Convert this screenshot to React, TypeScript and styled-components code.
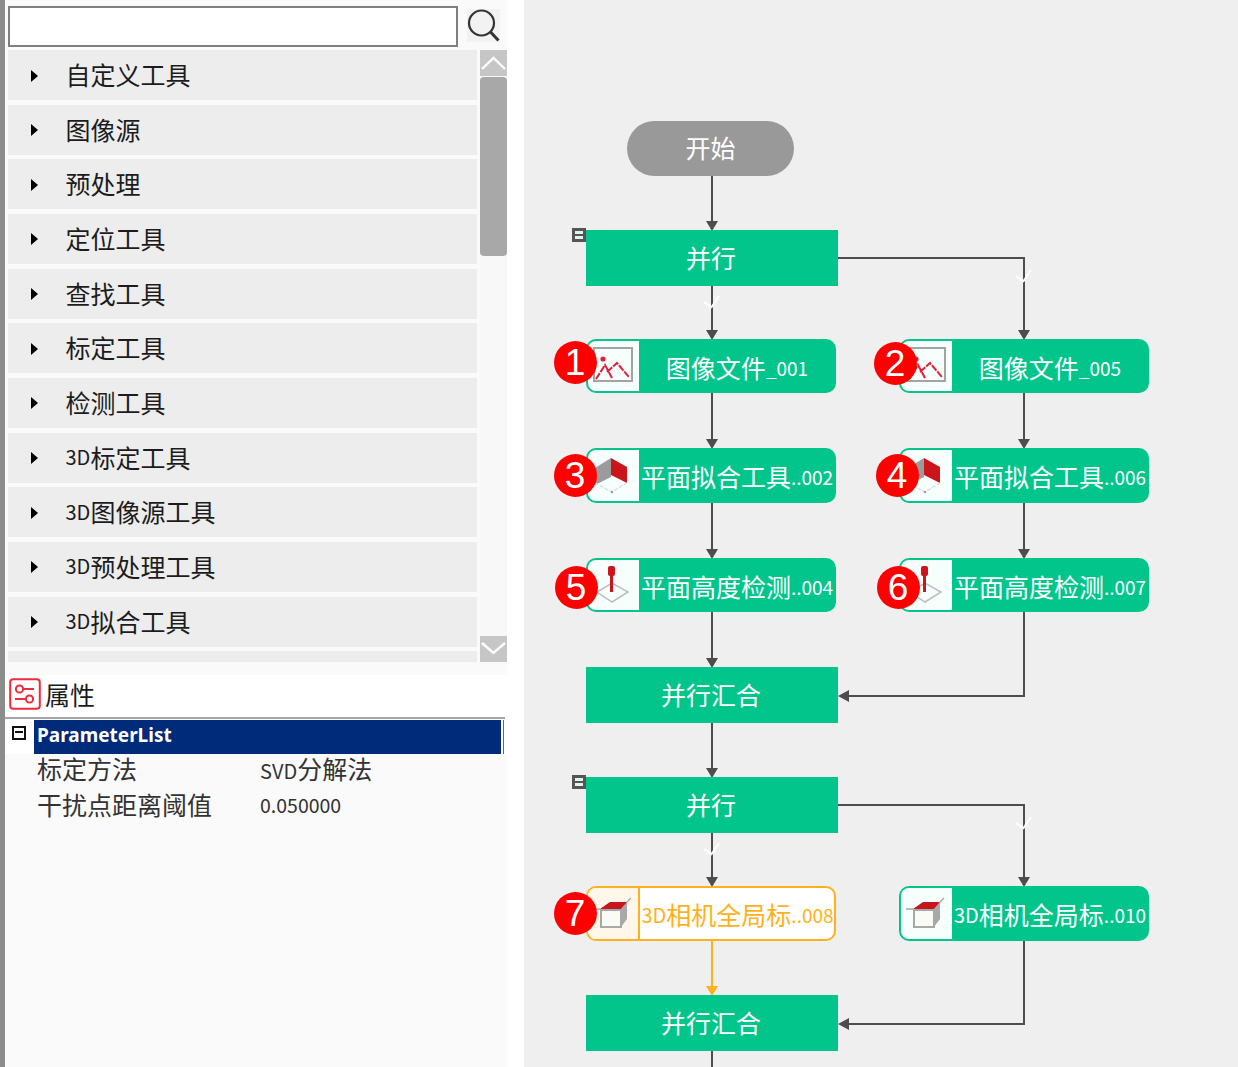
import React from "react"
import styled, { createGlobalStyle } from "styled-components"

const CJK = `"Noto Sans CJK SC", "Noto Sans", sans-serif`

const GlobalStyle = createGlobalStyle`
  html, body {
    margin: 0;
    padding: 0;
    background: #fff;
    font-family: ${CJK};
  }
`

const Page = styled.div`
  display: flex;
  width: 1238px;
  height: 1067px;
  overflow: hidden;
`

const Sidebar = styled.aside`
  box-sizing: border-box;
  width: 524px;
  flex: none;
  display: flex;
  padding-right: 17px;
  background: #fff;
`

const SideEdge = styled.div`
  width: 5px;
  flex: none;
  background: #8c8c8c;
`

const SideBody = styled.div`
  flex: 1;
  min-width: 0;
  display: flex;
  flex-direction: column;
  background: #fafafa;
`

const SearchRow = styled.div`
  display: flex;
  align-items: center;
  height: 50px;
  padding: 3px 0 0 3px;
  box-sizing: border-box;
  gap: 9px;
`

const SearchInput = styled.div`
  box-sizing: border-box;
  width: 450px;
  height: 41px;
  background: #fff;
  border: 2px solid #7f7f7f;
`

const SearchButton = styled.div`
  width: 33px;
  height: 33px;
  margin-bottom: 2px;
  background: #f2f2f2;
  display: flex;
`

const ToolBox = styled.div`
  display: flex;
  height: 612px;
  flex: none;
`

const ToolList = styled.ul`
  list-style: none;
  margin: 0 0 0 3px;
  padding: 0;
  width: 469px;
  height: 612px;
  overflow: hidden;
  display: flex;
  flex-direction: column;
  gap: 4.67px;
`

const ToolItem = styled.li`
  flex: none;
  box-sizing: border-box;
  height: 50px;
  display: flex;
  align-items: center;
  padding: 0 0 1px 23px;
  background: #ededed;
  color: #1c1c1c;
  font-size: 25px;
  line-height: 1;
`

const Caret = styled.span`
  width: 0;
  height: 0;
  margin: 2px 27.5px 0 0;
  border-left: 7px solid #000;
  border-top: 6px solid transparent;
  border-bottom: 6px solid transparent;
`

const Latin = styled.span<{ $size?: number }>`
  font-size: ${(p) => p.$size ?? 20}px;
`

const ScrollTrack = styled.div`
  margin-left: 3px;
  width: 27px;
  height: 612px;
  display: flex;
  flex-direction: column;
  background: #f8f8f8;
`

const ScrollStep = styled.div`
  height: 26px;
  flex: none;
  background: #c6c6c6;
  display: flex;
`

const ScrollThumb = styled.div`
  height: 179px;
  margin-top: 1px;
  flex: none;
  border-radius: 4px;
  background: #a8a8a8;
`

const ScrollSpace = styled.div`
  flex: 1;
`

const PropsHeader = styled.div`
  margin-top: 13px;
  height: 42px;
  display: flex;
  align-items: center;
  gap: 4px;
  padding: 0 0 4px 4px;
  background: #fff;
  color: #1c1c1c;
  font-size: 25px;
  box-sizing: border-box;
  line-height: 1;
`

const PropsRule = styled.div`
  height: 2px;
  width: 500px;
  background: #a6a6a6;
`

const GroupRow = styled.div`
  display: flex;
  height: 34px;
  margin-top: 1px;
  background: #fff;
`

const GroupToggle = styled.div`
  width: 29px;
  flex: none;
  position: relative;
`

const MinusBox = styled.span`
  position: absolute;
  left: 7px;
  top: 6px;
  box-sizing: border-box;
  width: 14px;
  height: 14px;
  border: 2px solid #111;
  background: #fff;
  &::after {
    content: "";
    position: absolute;
    left: 1px;
    right: 1px;
    top: 3px;
    height: 2px;
    background: #111;
  }
`

const GroupTitle = styled.div`
  width: 467px;
  flex: none;
  background: #002a7a;
  color: #fff;
  font-family: "Noto Sans", sans-serif;
  font-weight: 700;
  font-size: 19px;
  line-height: 31px;
  padding-left: 3px;
  box-sizing: border-box;
`

const RedEdge = styled.div`
  width: 1px;
  margin-left: 2px;
  background: #ee2a3c;
`

const PropRows = styled.div`
  display: flex;
  flex-direction: column;
`

const PropRow = styled.div`
  display: grid;
  grid-template-columns: 223px 1fr;
  height: 36px;
  align-items: start;
  padding-left: 32px;
  color: #333;
  font-size: 25px;
  line-height: 29px;
`

const Canvas = styled.main`
  position: relative;
  flex: 1;
  background: #efefef;
  overflow: hidden;
`

const Wires = styled.svg`
  position: absolute;
  left: 0;
  top: 0;
  width: 714px;
  height: 1067px;
`

const Node = styled.div<{ $x: number; $y: number; $w: number; $h: number }>`
  position: absolute;
  left: ${(p) => p.$x}px;
  top: ${(p) => p.$y}px;
  width: ${(p) => p.$w}px;
  height: ${(p) => p.$h}px;
  box-sizing: border-box;
`

const StartNode = styled(Node)`
  display: flex;
  align-items: center;
  justify-content: center;
  padding: 0 0 3px 0;
  border-radius: 28px;
  background: #999;
  color: #fff;
  font-size: 25px;
`

const FlowNode = styled(Node)`
  display: flex;
  align-items: center;
  justify-content: center;
  padding: 0 2px 3px 0;
  background: #02c58c;
  color: #fff;
  font-size: 25px;
`

const Collapse = styled.span<{ $x: number; $y: number }>`
  position: absolute;
  left: ${(p) => p.$x}px;
  top: ${(p) => p.$y}px;
  box-sizing: border-box;
  width: 14px;
  height: 14px;
  border: 3px solid #555;
  background: #dff5ee;
  &::after {
    content: "";
    position: absolute;
    left: 0;
    right: 0;
    top: 3px;
    height: 2px;
    background: #555;
  }
`

const ToolNode = styled(Node)<{ $active?: boolean }>`
  display: flex;
  overflow: hidden;
  border: 2px solid ${(p) => (p.$active ? "#ffb11b" : "#02c58c")};
  border-radius: 10px;
  background: ${(p) => (p.$active ? "#fff" : "#02c58c")};
  color: ${(p) => (p.$active ? "#ffb11b" : "#fff")};
`

const ToolIcon = styled.div<{ $active?: boolean }>`
  width: ${(p) => (p.$active ? 52 : 51)}px;
  flex: none;
  background: ${(p) => (p.$active ? "#fff7e9" : "#f6fffc")};
  border-right: ${(p) => (p.$active ? "2px solid #ffb11b" : "0")};
  box-sizing: border-box;
`

const ToolLabel = styled.div`
  flex: 1;
  min-width: 0;
  display: flex;
  align-items: center;
  justify-content: center;
  font-size: 25px;
  white-space: nowrap;
  padding: 2px 0 0 1px;
  line-height: 1;
`

const Badge = styled.span<{ $x: number; $y: number }>`
  position: absolute;
  left: ${(p) => p.$x - 21.5}px;
  top: ${(p) => p.$y - 21.5}px;
  width: 43px;
  height: 43px;
  border-radius: 50%;
  background: #ff0000;
  color: #fff;
  display: flex;
  align-items: center;
  justify-content: center;
  font-family: "Liberation Sans", Arial, sans-serif;
  font-size: 37px;
  line-height: 1;
`

const SearchIcon = () => (
  <svg width="33" height="33" viewBox="0 0 33 33" fill="none" stroke="#333" strokeWidth="2.2">
    <circle cx="14.5" cy="14" r="12.5" />
    <path d="M23.5 23l8 8.5" strokeWidth="3" />
  </svg>
)

const ChevronIcon = ({ down }: { down?: boolean }) => (
  <svg width="27" height="26" viewBox="0 0 27 26" fill="none" stroke="#fff" strokeWidth="2.4">
    <path d={down ? "M2 7l11.5 10L25 7" : "M2 19L13.5 8 25 19"} />
  </svg>
)

const PropsIcon = () => (
  <svg width="32" height="32" viewBox="0 0 32 32" fill="none" stroke="#ee2a3c" strokeWidth="2">
    <rect x="1.2" y="1.2" width="29.6" height="29.6" rx="3" />
    <circle cx="10.5" cy="11" r="3.6" />
    <path d="M14 11h11M6 21h11" />
    <circle cx="20.5" cy="21" r="3.6" />
  </svg>
)

const ImageIcon = () => (
  <svg width="50" height="50" viewBox="0 0 50 50" fill="none">
    <rect x="6" y="7" width="38" height="33" stroke="#a3a3a3" strokeWidth="2" />
    <circle cx="15" cy="18" r="2.6" fill="#e0203a" />
    <path d="M8 38l9-14 7 13M19 31l10-9 12 14" stroke="#e0203a" strokeWidth="2" strokeDasharray="7 1.2" />
  </svg>
)

const PlaneIcon = () => (
  <svg width="50" height="50" viewBox="0 0 50 50" fill="none">
    <path d="M7 18l16-10v19L7 35z" fill="#9b9b9b" />
    <path d="M23 8l16 9v16l-16-8z" fill="#cc141d" />
    <path d="M7 33l17 9 15-9" stroke="#dcdcdc" strokeWidth="1.4" strokeDasharray="4 1.5" />
    <circle cx="24" cy="42" r="1.2" fill="#999" />
  </svg>
)

const HeightIcon = () => (
  <svg width="50" height="50" viewBox="0 0 50 50" fill="none">
    <path d="M9 32l15-9 16 9-16 10z" stroke="#bdbdbd" strokeWidth="1.5" />
    <rect x="20" y="6" width="7" height="10" rx="2" fill="#cc141d" />
    <path d="M23.5 15v17" stroke="#cc141d" strokeWidth="3" />
  </svg>
)

const CubeIcon = () => (
  <svg width="50" height="50" viewBox="0 0 50 50" fill="none">
    <path d="M5 21h7M39 14l4-4" stroke="#a8a8a8" strokeWidth="1.4" />
    <path d="M33 21l6-7v17l-6 8z" fill="#a8a8a8" />
    <path d="M12 21l10-7h17l-6 7z" fill="#c8141c" />
    <rect x="13" y="22" width="20" height="17" fill="#fbfbf6" stroke="#a8a8a8" strokeWidth="2" />
  </svg>
)

type ToolIconKind = "image" | "plane" | "height" | "cube"

const toolIcons: Record<ToolIconKind, React.ReactNode> = {
  image: <ImageIcon />,
  plane: <PlaneIcon />,
  height: <HeightIcon />,
  cube: <CubeIcon />,
}

const toolGroups = [
  "自定义工具",
  "图像源",
  "预处理",
  "定位工具",
  "查找工具",
  "标定工具",
  "检测工具",
  "3D标定工具",
  "3D图像源工具",
  "3D预处理工具",
  "3D拟合工具",
  "",
]

const toolNodes: {
  x: number
  y: number
  h: number
  icon: ToolIconKind
  prefix?: string
  name: string
  tail: string
  active?: boolean
}[] = [
  { x: 62, y: 339, h: 54, icon: "image", name: "图像文件", tail: "_001" },
  { x: 375, y: 339, h: 54, icon: "image", name: "图像文件", tail: "_005" },
  { x: 62, y: 448, h: 55, icon: "plane", name: "平面拟合工具", tail: "..002" },
  { x: 375, y: 448, h: 55, icon: "plane", name: "平面拟合工具", tail: "..006" },
  { x: 62, y: 558, h: 54, icon: "height", name: "平面高度检测", tail: "..004" },
  { x: 375, y: 558, h: 54, icon: "height", name: "平面高度检测", tail: "..007" },
  { x: 62, y: 886, h: 55, icon: "cube", prefix: "3D", name: "相机全局标", tail: "..008", active: true },
  { x: 375, y: 886, h: 55, icon: "cube", prefix: "3D", name: "相机全局标", tail: "..010" },
]

const flowNodes = [
  { y: 230, text: "并行", fold: true },
  { y: 667, text: "并行汇合" },
  { y: 777, text: "并行", fold: true },
  { y: 995, text: "并行汇合" },
]

const badges = [
  { n: 1, x: 51, y: 362 },
  { n: 2, x: 371, y: 363 },
  { n: 3, x: 51, y: 475 },
  { n: 4, x: 373, y: 475 },
  { n: 5, x: 52, y: 587 },
  { n: 6, x: 374, y: 587 },
  { n: 7, x: 51, y: 913 },
]

const LEFT = 188
const RIGHT = 500

const wirePaths = [
  `M${LEFT} 176V222`,
  `M${LEFT} 286V330`,
  `M${LEFT} 393V440`,
  `M${LEFT} 503V550`,
  `M${LEFT} 612V660`,
  `M${LEFT} 723V770`,
  `M${LEFT} 833V878`,
  `M${LEFT} 1051V1067`,
  `M314 258H${RIGHT}V330`,
  `M${RIGHT} 393V440`,
  `M${RIGHT} 503V550`,
  `M${RIGHT} 612V696H322`,
  `M314 805H${RIGHT}V878`,
  `M${RIGHT} 941V1024H322`,
]

const downArrows = [
  [LEFT, 231], [LEFT, 340], [LEFT, 449], [LEFT, 559], [LEFT, 668], [LEFT, 778], [LEFT, 887],
  [RIGHT, 340], [RIGHT, 449], [RIGHT, 559], [RIGHT, 887],
]

const leftArrows = [[314, 696], [314, 1024]]

const branchTicks = [
  [LEFT, 302], [RIGHT, 276], [LEFT, 849], [RIGHT, 823],
]

const App = () => (
  <Page>
    <GlobalStyle />
    <Sidebar>
      <SideEdge />
      <SideBody>
        <SearchRow>
          <SearchInput />
          <SearchButton>
            <SearchIcon />
          </SearchButton>
        </SearchRow>
        <ToolBox>
          <ToolList>
            {toolGroups.map((label, i) => {
              const has3D = label.startsWith("3D")
              return (
                <ToolItem key={i}>
                  {label && <Caret />}
                  {has3D && <Latin>3D</Latin>}
                  {has3D ? label.slice(2) : label}
                </ToolItem>
              )
            })}
          </ToolList>
          <ScrollTrack>
            <ScrollStep>
              <ChevronIcon />
            </ScrollStep>
            <ScrollThumb />
            <ScrollSpace />
            <ScrollStep>
              <ChevronIcon down />
            </ScrollStep>
          </ScrollTrack>
        </ToolBox>
        <PropsHeader>
          <PropsIcon />
          属性
        </PropsHeader>
        <PropsRule />
        <GroupRow>
          <GroupToggle>
            <MinusBox />
          </GroupToggle>
          <GroupTitle>ParameterList</GroupTitle>
          <RedEdge />
        </GroupRow>
        <PropRows>
          <PropRow>
            <span>标定方法</span>
            <span>
              <Latin $size={20}>SVD</Latin>分解法
            </span>
          </PropRow>
          <PropRow>
            <span>干扰点距离阈值</span>
            <Latin $size={19.5}>0.050000</Latin>
          </PropRow>
        </PropRows>
      </SideBody>
    </Sidebar>
    <Canvas>
      <Wires viewBox="0 0 714 1067" fill="none">
        {wirePaths.map((d) => (
          <path key={d} d={d} stroke="#4d4d4d" strokeWidth="2" />
        ))}
        <path d={`M${LEFT} 941V988`} stroke="#ffb11b" strokeWidth="2" />
        {downArrows.map(([x, y]) => (
          <path key={`${x}-${y}`} d={`M${x - 6} ${y - 10}h12l-6 10z`} fill="#4d4d4d" />
        ))}
        <path d={`M${LEFT - 6} 986h12l-6 10z`} fill="#ffb11b" />
        {leftArrows.map(([x, y]) => (
          <path key={y} d={`M${x} ${y}l11-6v12z`} fill="#4d4d4d" />
        ))}
        {branchTicks.map(([x, y]) => (
          <path key={y} d={`M${x - 8} ${y}l7.5 5 7.5-11`} stroke="#fff" strokeWidth="2" />
        ))}
      </Wires>

      <StartNode $x={103} $y={121} $w={167} $h={55}>
        开始
      </StartNode>

      {flowNodes.map((node) => (
        <React.Fragment key={node.y}>
          <FlowNode $x={62} $y={node.y} $w={252} $h={56}>
            {node.text}
          </FlowNode>
          {node.fold && <Collapse $x={48} $y={node.y - 2} />}
        </React.Fragment>
      ))}

      {toolNodes.map((node) => (
        <ToolNode key={node.tail} $x={node.x} $y={node.y} $w={250} $h={node.h} $active={node.active}>
          <ToolIcon $active={node.active}>{toolIcons[node.icon]}</ToolIcon>
          <ToolLabel>
            {node.prefix && <Latin>{node.prefix}</Latin>}
            {node.name}
            <Latin $size={19}>{node.tail}</Latin>
          </ToolLabel>
        </ToolNode>
      ))}

      {badges.map((badge) => (
        <Badge key={badge.n} $x={badge.x} $y={badge.y}>
          {badge.n}
        </Badge>
      ))}
    </Canvas>
  </Page>
)

export default App
